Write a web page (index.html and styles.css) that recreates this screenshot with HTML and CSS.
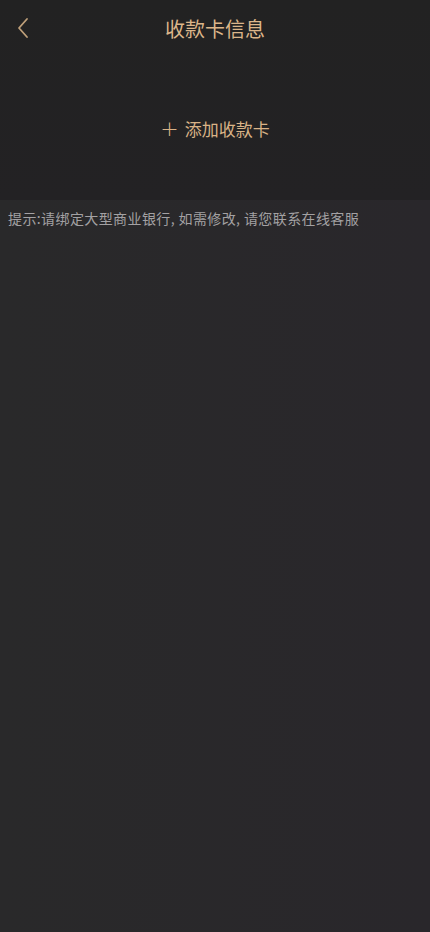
FILE: index.html
```html
<!DOCTYPE html>
<html lang="zh-CN">
  <head>
    <meta charset="UTF-8">
    <meta name="viewport" content="width=device-width, initial-scale=1.0">
    <title>收款卡信息</title>
    <link rel="stylesheet" href="styles.css">
  </head>
  <body>
    <div class="top">
      <header class="navbar">
        <a class="back" href="#">
          <svg width="14" height="22" viewBox="0 0 14 22">
            <path d="M11 2 L3 11 L11 20" fill="none" stroke="#bfa07a" stroke-width="1.8" stroke-linecap="round" stroke-linejoin="round"/>
          </svg>
        </a>
        <h1 class="title">收款卡信息</h1>
      </header>
      <div class="addCard">
        <span class="plus">+</span>
        <span>添加收款卡</span>
      </div>
    </div>
    <p class="tip">提示:请绑定大型商业银行, 如需修改, 请您联系在线客服</p>
  </body>
</html>
```

FILE: styles.css
```css
html {
  font-family: "Noto Sans CJK SC", "Noto Sans", sans-serif;
}

body {
  margin: 0;
  min-height: 932px;
  background: linear-gradient(to right, #29292a, #29272b);
}

.top {
  height: 200px;
  background: linear-gradient(to bottom, #222222, #232224);
}

.navbar {
  height: 56px;
  display: flex;
  align-items: center;
  justify-content: center;
  position: relative;
}

.back {
  position: absolute;
  left: 16px;
  top: 17px;
  display: flex;
}

.title {
  margin: 0;
  font-size: 20px;
  font-weight: normal;
  color: #dcb68a;
}

.addCard {
  display: flex;
  justify-content: center;
  align-items: center;
  gap: 6px;
  margin-top: 60px;
  font-size: 17px;
  color: #d9b387;
}

.plus {
  font-size: 22px;
  line-height: 1;
  font-family: "DejaVu Sans", sans-serif;
  font-weight: 300;
}

.tip {
  margin: 0;
  padding: 8px 8px;
  font-size: 14px;
  letter-spacing: 0.4px;
  color: #a3a1a3;
}
```
